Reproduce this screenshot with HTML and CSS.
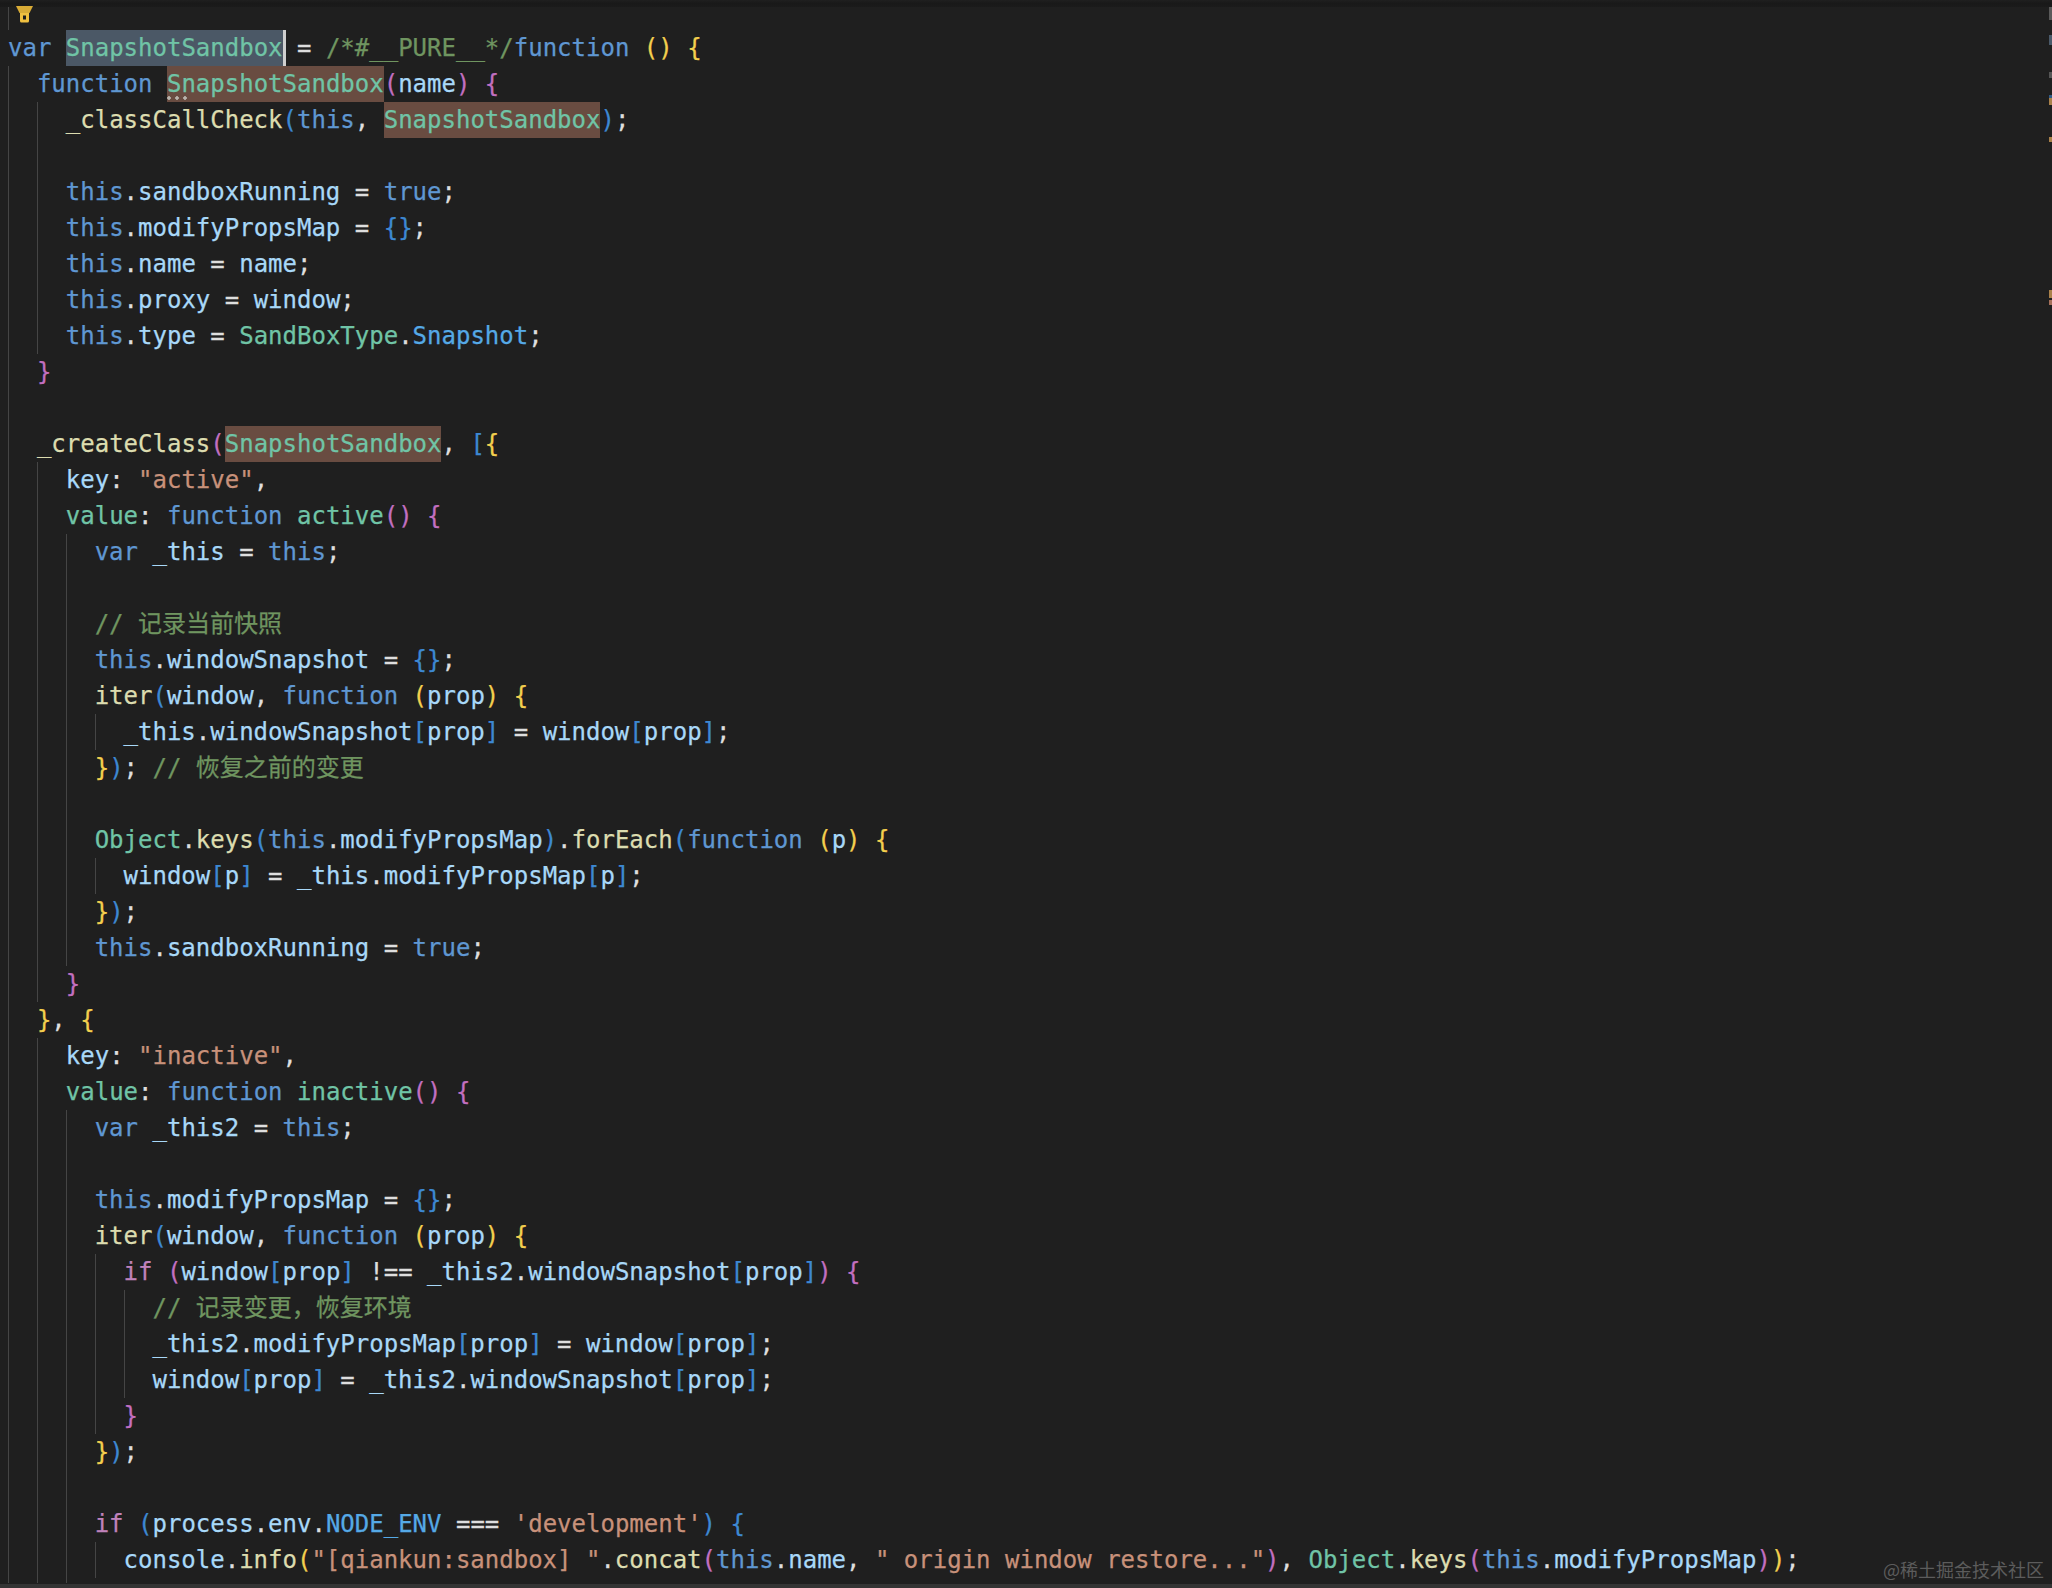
FILE: index.html
```html
<!DOCTYPE html>
<html lang="en">
<head>
<meta charset="utf-8">
<title>SnapshotSandbox</title>
<link rel="stylesheet" href="styles.css">
</head>
<body>
<main class="editor">
<div class="shadow"></div>
<div class="peek"><span class="g"></span><svg class="bulb" viewBox="0 0 17 17" width="17" height="17"><path d="M0 0H17L13.500 7H3.500Z" fill="#d8ab36"/><path d="M4 7H13V15Q13 16.500 11.500 16.500H5.500Q4 16.500 4 15ZM7 9.500V13.500H10V9.500Z" fill="#f0c040" fill-rule="evenodd"/></svg></div>
<div class="l"><b class="k">var</b> <span class="sel c">SnapshotSandbox</span> <i>=</i> <b class="m">/*#__PURE__*/</b><b class="k">function</b> <b class="y">()</b> <b class="y">{</b></div>
<div class="l"><span class="g"></span><b class="k">function</b> <span class="hl dots c">SnapshotSandbox</span><b class="o">(</b><b class="v">name</b><b class="o">)</b> <b class="o">{</b></div>
<div class="l"><span class="g"></span><span class="g"></span><b class="f">_classCallCheck</b><b class="u">(</b><b class="k">this</b><i>, </i><span class="hl c">SnapshotSandbox</span><b class="u">)</b><i>;</i></div>
<div class="l"><span class="g"></span><span class="g"></span></div>
<div class="l"><span class="g"></span><span class="g"></span><b class="k">this</b><i>.</i><b class="v">sandboxRunning</b> <i>=</i> <b class="k">true</b><i>;</i></div>
<div class="l"><span class="g"></span><span class="g"></span><b class="k">this</b><i>.</i><b class="v">modifyPropsMap</b> <i>=</i> <b class="u">{}</b><i>;</i></div>
<div class="l"><span class="g"></span><span class="g"></span><b class="k">this</b><i>.</i><b class="v">name</b> <i>=</i> <b class="v">name</b><i>;</i></div>
<div class="l"><span class="g"></span><span class="g"></span><b class="k">this</b><i>.</i><b class="v">proxy</b> <i>=</i> <b class="v">window</b><i>;</i></div>
<div class="l"><span class="g"></span><span class="g"></span><b class="k">this</b><i>.</i><b class="v">type</b> <i>=</i> <b class="c">SandBoxType</b><i>.</i><b class="n">Snapshot</b><i>;</i></div>
<div class="l"><span class="g"></span><b class="o">}</b></div>
<div class="l"><span class="g"></span></div>
<div class="l"><span class="g"></span><b class="f">_createClass</b><b class="o">(</b><span class="hl c">SnapshotSandbox</span><i>, </i><b class="u">[</b><b class="y">{</b></div>
<div class="l"><span class="g"></span><span class="g"></span><b class="v">key</b><i>: </i><b class="s">"active"</b><i>,</i></div>
<div class="l"><span class="g"></span><span class="g"></span><b class="c">value</b><i>: </i><b class="k">function</b> <b class="c">active</b><b class="o">()</b> <b class="o">{</b></div>
<div class="l"><span class="g"></span><span class="g"></span><span class="g"></span><b class="k">var</b> <b class="v">_this</b> <i>=</i> <b class="k">this</b><i>;</i></div>
<div class="l"><span class="g"></span><span class="g"></span><span class="g"></span></div>
<div class="l"><span class="g"></span><span class="g"></span><span class="g"></span><b class="m">// 记录当前快照</b></div>
<div class="l"><span class="g"></span><span class="g"></span><span class="g"></span><b class="k">this</b><i>.</i><b class="v">windowSnapshot</b> <i>=</i> <b class="u">{}</b><i>;</i></div>
<div class="l"><span class="g"></span><span class="g"></span><span class="g"></span><b class="f">iter</b><b class="u">(</b><b class="v">window</b><i>, </i><b class="k">function</b> <b class="y">(</b><b class="v">prop</b><b class="y">)</b> <b class="y">{</b></div>
<div class="l"><span class="g"></span><span class="g"></span><span class="g"></span><span class="g"></span><b class="v">_this</b><i>.</i><b class="v">windowSnapshot</b><b class="u">[</b><b class="v">prop</b><b class="u">]</b> <i>=</i> <b class="v">window</b><b class="u">[</b><b class="v">prop</b><b class="u">]</b><i>;</i></div>
<div class="l"><span class="g"></span><span class="g"></span><span class="g"></span><b class="y">}</b><b class="u">)</b><i>;</i> <b class="m">// 恢复之前的变更</b></div>
<div class="l"><span class="g"></span><span class="g"></span><span class="g"></span></div>
<div class="l"><span class="g"></span><span class="g"></span><span class="g"></span><b class="c">Object</b><i>.</i><b class="f">keys</b><b class="u">(</b><b class="k">this</b><i>.</i><b class="v">modifyPropsMap</b><b class="u">)</b><i>.</i><b class="f">forEach</b><b class="u">(</b><b class="k">function</b> <b class="y">(</b><b class="v">p</b><b class="y">)</b> <b class="y">{</b></div>
<div class="l"><span class="g"></span><span class="g"></span><span class="g"></span><span class="g"></span><b class="v">window</b><b class="u">[</b><b class="v">p</b><b class="u">]</b> <i>=</i> <b class="v">_this</b><i>.</i><b class="v">modifyPropsMap</b><b class="u">[</b><b class="v">p</b><b class="u">]</b><i>;</i></div>
<div class="l"><span class="g"></span><span class="g"></span><span class="g"></span><b class="y">}</b><b class="u">)</b><i>;</i></div>
<div class="l"><span class="g"></span><span class="g"></span><span class="g"></span><b class="k">this</b><i>.</i><b class="v">sandboxRunning</b> <i>=</i> <b class="k">true</b><i>;</i></div>
<div class="l"><span class="g"></span><span class="g"></span><b class="o">}</b></div>
<div class="l"><span class="g"></span><b class="y">}</b><i>, </i><b class="y">{</b></div>
<div class="l"><span class="g"></span><span class="g"></span><b class="v">key</b><i>: </i><b class="s">"inactive"</b><i>,</i></div>
<div class="l"><span class="g"></span><span class="g"></span><b class="c">value</b><i>: </i><b class="k">function</b> <b class="c">inactive</b><b class="o">()</b> <b class="o">{</b></div>
<div class="l"><span class="g"></span><span class="g"></span><span class="g"></span><b class="k">var</b> <b class="v">_this2</b> <i>=</i> <b class="k">this</b><i>;</i></div>
<div class="l"><span class="g"></span><span class="g"></span><span class="g"></span></div>
<div class="l"><span class="g"></span><span class="g"></span><span class="g"></span><b class="k">this</b><i>.</i><b class="v">modifyPropsMap</b> <i>=</i> <b class="u">{}</b><i>;</i></div>
<div class="l"><span class="g"></span><span class="g"></span><span class="g"></span><b class="f">iter</b><b class="u">(</b><b class="v">window</b><i>, </i><b class="k">function</b> <b class="y">(</b><b class="v">prop</b><b class="y">)</b> <b class="y">{</b></div>
<div class="l"><span class="g"></span><span class="g"></span><span class="g"></span><span class="g"></span><b class="w">if</b> <b class="o">(</b><b class="v">window</b><b class="u">[</b><b class="v">prop</b><b class="u">]</b> <i>!==</i> <b class="v">_this2</b><i>.</i><b class="v">windowSnapshot</b><b class="u">[</b><b class="v">prop</b><b class="u">]</b><b class="o">)</b> <b class="o">{</b></div>
<div class="l"><span class="g"></span><span class="g"></span><span class="g"></span><span class="g"></span><span class="g"></span><b class="m">// 记录变更，恢复环境</b></div>
<div class="l"><span class="g"></span><span class="g"></span><span class="g"></span><span class="g"></span><span class="g"></span><b class="v">_this2</b><i>.</i><b class="v">modifyPropsMap</b><b class="u">[</b><b class="v">prop</b><b class="u">]</b> <i>=</i> <b class="v">window</b><b class="u">[</b><b class="v">prop</b><b class="u">]</b><i>;</i></div>
<div class="l"><span class="g"></span><span class="g"></span><span class="g"></span><span class="g"></span><span class="g"></span><b class="v">window</b><b class="u">[</b><b class="v">prop</b><b class="u">]</b> <i>=</i> <b class="v">_this2</b><i>.</i><b class="v">windowSnapshot</b><b class="u">[</b><b class="v">prop</b><b class="u">]</b><i>;</i></div>
<div class="l"><span class="g"></span><span class="g"></span><span class="g"></span><span class="g"></span><b class="o">}</b></div>
<div class="l"><span class="g"></span><span class="g"></span><span class="g"></span><b class="y">}</b><b class="u">)</b><i>;</i></div>
<div class="l"><span class="g"></span><span class="g"></span><span class="g"></span></div>
<div class="l"><span class="g"></span><span class="g"></span><span class="g"></span><b class="w">if</b> <b class="u">(</b><b class="v">process</b><i>.</i><b class="v">env</b><i>.</i><b class="n">NODE_ENV</b> <i>===</i> <b class="s">'development'</b><b class="u">)</b> <b class="u">{</b></div>
<div class="l"><span class="g"></span><span class="g"></span><span class="g"></span><span class="g"></span><b class="v">console</b><i>.</i><b class="f">info</b><b class="y">(</b><b class="s">"[qiankun:sandbox] "</b><i>.</i><b class="f">concat</b><b class="o">(</b><b class="k">this</b><i>.</i><b class="v">name</b><i>, </i><b class="s">" origin window restore..."</b><b class="o">)</b><i>, </i><b class="c">Object</b><i>.</i><b class="f">keys</b><b class="o">(</b><b class="k">this</b><i>.</i><b class="v">modifyPropsMap</b><b class="o">)</b><b class="y">)</b><i>;</i></div>
<div class="tail"><span class="g"></span><span class="g"></span><span class="g"></span></div>
<div class="ruler"></div>
<div class="mark">@稀土掘金技术社区</div>
</main>
</body>
</html>
```
FILE: styles.css
```css
* { box-sizing: border-box; }
html, body { margin: 0; background: #1f1f1f; }
.editor {
  position: relative;
  width: 2052px;
  height: 1588px;
  overflow: hidden;
  padding-left: 8px;
  background: #1f1f1f;
  border-bottom: 4px solid #343434;
  font-family: "DejaVu Sans Mono", "Noto Sans CJK SC", monospace;
  font-size: 24px;
  color: #d4d4d4;
  -webkit-text-stroke: 0.25px currentColor;
}
.shadow { height: 7px; margin-left: -8px; background: linear-gradient(#1f1f1f, #191919 50%, #1b1b1b); }
.peek { position: relative; height: 23px; white-space: pre; }
.peek .g { height: 23px; }
.bulb { position: absolute; left: 8px; top: -1px; }
.l { height: 36px; line-height: 36px; white-space: pre; }
.tail { height: 5px; overflow: hidden; }
.g {
  display: inline-block;
  width: 2ch;
  height: 36px;
  vertical-align: top;
  border-left: 1px solid #454545;
}
.tail .g { height: 5px; }
b, i { font-weight: 400; font-style: normal; }
.k { color: #5f97d2; }
.v { color: #a8d8f8; }
.f { color: #dcdcaf; }
.c { color: #70c4a6; }
.n { color: #55a9e6; }
.s { color: #c8917a; }
.m { color: #6f9560; }
.w { color: #c082bb; }
.y { color: #f3cf4e; }
.o { color: #c26fc0; }
.u { color: #3d88d2; }
i { color: #dedede; }
.sel {
  display: inline-block;
  height: 36px;
  vertical-align: top;
  background: #4b5866;
  border-right: 3px solid #cfcfcf;
  margin-right: -3px;
}
.hl {
  display: inline-block;
  height: 36px;
  vertical-align: top;
  background: #694c41;
}
.dots { position: relative; }
.dots::after {
  content: "";
  position: absolute;
  left: 0;
  bottom: 2px;
  width: 21px;
  height: 4px;
  background: radial-gradient(circle at 2px 2px, #b9b3ac 1.5px, transparent 2px) 0 0 / 8px 4px repeat-x;
}
.ruler {
  position: absolute;
  right: 0;
  top: 0;
  width: 3px;
  height: 310px;
  background:
    linear-gradient(#5a5a5a, #5a5a5a) 0 7px / 3px 13px no-repeat,
    linear-gradient(#4a5a6a, #4a5a6a) 0 35px / 3px 10px no-repeat,
    linear-gradient(#555, #555) 0 72px / 3px 6px no-repeat,
    linear-gradient(#2f5a86, #2f5a86) 0 95px / 3px 3px no-repeat,
    linear-gradient(#a9814a, #a9814a) 0 98px / 3px 7px no-repeat,
    linear-gradient(#a9814a, #a9814a) 0 137px / 3px 5px no-repeat,
    linear-gradient(#a9814a, #a9814a) 0 290px / 3px 8px no-repeat,
    linear-gradient(#a5705a, #a5705a) 0 300px / 3px 5px no-repeat;
}
.mark {
  position: absolute;
  right: 8px;
  bottom: 1px;
  font-family: "Noto Sans CJK SC", sans-serif;
  font-size: 18px;
  line-height: 28px;
  color: #5c5c5c;
  -webkit-text-stroke: 0;
}
```
